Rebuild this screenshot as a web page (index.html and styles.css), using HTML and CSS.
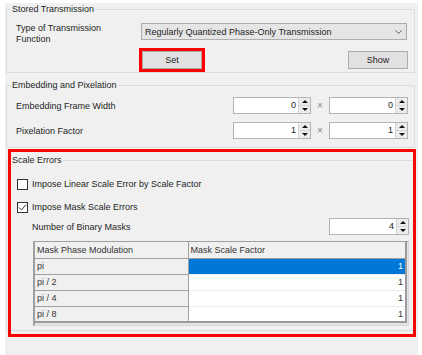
FILE: index.html
```html
<!DOCTYPE html>
<html>
<head>
<meta charset="utf-8">
<link rel="stylesheet" href="styles.css">
</head>
<body>
<div class="panel">
  <fieldset class="group g1">
    <legend>Stored Transmission</legend>
    <div class="r-type">
      <div class="lbl2">Type of Transmission<br>Function</div>
      <div class="combo">
        <span>Regularly Quantized Phase-Only Transmission</span>
        <svg class="chev" width="7" height="4" viewBox="0 0 7 4"><polyline points="0.5,0.5 3.5,3.5 6.5,0.5" fill="none" stroke="#606060" stroke-width="1"/></svg>
      </div>
    </div>
    <div class="r-btns">
      <button class="btn set">Set</button>
      <button class="btn show">Show</button>
    </div>
  </fieldset>

  <fieldset class="group g2">
    <legend>Embedding and Pixelation</legend>
    <div class="pair first">
      <span class="plbl">Embedding Frame Width</span>
      <div class="spin w78"><span class="val">0</span><div class="arrows"><span class="up"></span><span class="dn"></span></div></div>
      <span class="times">×</span>
      <div class="spin w79"><span class="val">0</span><div class="arrows"><span class="up"></span><span class="dn"></span></div></div>
    </div>
    <div class="pair second">
      <span class="plbl">Pixelation Factor</span>
      <div class="spin w78"><span class="val">1</span><div class="arrows"><span class="up"></span><span class="dn"></span></div></div>
      <span class="times">×</span>
      <div class="spin w79"><span class="val">1</span><div class="arrows"><span class="up"></span><span class="dn"></span></div></div>
    </div>
  </fieldset>

  <fieldset class="group g3">
    <legend>Scale Errors</legend>
    <div class="chk c1">
      <span class="box"></span>
      <span class="ctext">Impose Linear Scale Error by Scale Factor</span>
    </div>
    <div class="chk c2">
      <span class="box"><svg width="9" height="9" viewBox="0 0 9 9"><polyline points="1,4.5 3.5,7 8,1.5" fill="none" stroke="#333" stroke-width="1"/></svg></span>
      <span class="ctext">Impose Mask Scale Errors</span>
    </div>
    <div class="nrow">
      <span class="nlbl">Number of Binary Masks</span>
      <div class="spin w80"><span class="val">4</span><div class="arrows"><span class="up"></span><span class="dn"></span></div></div>
    </div>
    <div class="grid">
      <table>
        <tr><th class="hc1">Mask Phase Modulation</th><th class="hc2">Mask Scale Factor</th></tr>
        <tr><td class="rh">pi</td><td class="v sel">1</td></tr>
        <tr><td class="rh">pi / 2</td><td class="v">1</td></tr>
        <tr><td class="rh">pi / 4</td><td class="v">1</td></tr>
        <tr><td class="rh">pi / 8</td><td class="v">1</td></tr>
      </table>
    </div>
  </fieldset>

  <div class="highlight"></div>
</div>
</body>
</html>
```

FILE: styles.css
```css
* { box-sizing: border-box; }

body {
  margin: 0;
  background: #ffffff;
  font-family: "Liberation Sans", Arial, sans-serif;
  font-size: 9px;
  color: #1e1e1e;
}

.panel {
  position: relative;
  margin: 3px 0 0 5px;
  width: 413px;
  height: 352px;
  background: #f0f0f0;
  overflow: hidden;
}

.group {
  margin: 0 0 0 1px;
  width: 409px;
  border: 1px solid #dcdcdc;
  padding: 0;
  min-width: 0;
}

.group legend {
  margin-left: 4px;
  padding: 0 1px;
  line-height: 12px;
  height: 12px;
}

/* group 1 */
.r-type {
  display: flex;
  align-items: flex-start;
  margin-top: 8px;
  padding-left: 9px;
  padding-right: 7px;
  height: 17px;
}

.lbl2 {
  width: 125px;
  line-height: 11px;
  margin-top: -0.5px;
}

.combo {
  width: 266px;
  height: 17px;
  border: 1px solid #adadad;
  background: #e5e5e5;
  display: flex;
  align-items: center;
  padding-left: 3px;
  padding-right: 4px;
}

.chev { margin-left: auto; }

.r-btns {
  display: flex;
  justify-content: space-between;
  margin-top: 11px;
  padding-left: 135px;
  padding-right: 6px;
  padding-bottom: 3px;
}

.btn {
  width: 60px;
  height: 18px;
  border: 1px solid #adadad;
  background: #e1e1e1;
  font: inherit;
  color: #1e1e1e;
  padding: 0;
}

.set { outline: 3px solid #ff0000; }

/* group 2 */
.g2 { margin-top: 6px; }

.pair {
  display: flex;
  align-items: center;
  height: 17px;
  padding-left: 9px;
}

.pair.first { margin-top: 6px; }
.pair.second { margin-top: 8px; margin-bottom: 8px; }

.plbl { width: 217px; }

.times {
  width: 18px;
  text-align: center;
  color: #8a8a8a;
  font-size: 10px;
  line-height: 17px;
}

.spin {
  display: flex;
  height: 17px;
  border: 1px solid #b4b4b4;
  background: #ffffff;
}

.w78 { width: 78px; }
.w79 { width: 79px; }
.w80 { width: 80px; }

.val {
  flex: 1;
  text-align: right;
  padding-right: 2px;
  line-height: 15px;
}

.arrows {
  width: 12px;
  display: flex;
  flex-direction: column;
  border-left: 1px solid #d4d4d4;
  background: #ececec;
}

.arrows span {
  flex: 1;
  display: flex;
  align-items: center;
  justify-content: center;
}

.arrows .up { border-bottom: 1px solid #d4d4d4; }

.arrows .up::before {
  content: "";
  border-left: 3px solid transparent;
  border-right: 3px solid transparent;
  border-bottom: 3px solid #111;
}

.arrows .dn::before {
  content: "";
  border-left: 3px solid transparent;
  border-right: 3px solid transparent;
  border-top: 3px solid #111;
}

/* group 3 */
.g3 {
  margin-top: 6px;
  padding-bottom: 4px;
}

.chk {
  display: flex;
  align-items: center;
  height: 12px;
  padding-left: 10px;
}

.chk.c1 { margin-top: 12px; }
.chk.c2 { margin-top: 11px; }

.box {
  width: 11px;
  height: 11px;
  border: 1px solid #333;
  background: #ffffff;
  display: flex;
  align-items: center;
  justify-content: center;
}

.ctext { margin-left: 4px; }

.nrow {
  display: flex;
  align-items: center;
  height: 17px;
  margin-top: 5px;
  padding-left: 25px;
  padding-right: 5px;
}

.nlbl { margin-right: auto; }

.grid {
  margin: 6px 0 0 26px;
  width: 376px;
  border-top: 1px solid #a0a0a0;
  border-left: 2px solid #a0a0a0;
  border-right: 1px solid #d8d8d8;
  border-bottom: 1px solid #d8d8d8;
  background: #e4e4e4;
  padding: 0 1px 2px 0;
}

.grid table {
  width: 100%;
  border-collapse: collapse;
  border-right: 2px solid #9a9a9a;
  border-bottom: 2px solid #9a9a9a;
}

.grid th, .grid td {
  height: 16px;
  padding: 0 2px;
  font-weight: normal;
  text-align: left;
  color: #333;
  white-space: nowrap;
}

.grid th {
  background: #f0f0f0;
  border-bottom: 1px solid #a0a0a0;
}

.hc1 {
  width: 153px;
  border-right: 1px solid #a0a0a0;
}

.rh {
  background: #f0f0f0;
  border-bottom: 1px solid #a0a0a0;
  border-right: 1px solid #a0a0a0;
}

.v {
  background: #ffffff;
  text-align: right !important;
  border-bottom: 1px solid #ececec;
}

.v.sel {
  background: #0078d7;
  color: #ffffff !important;
}

/* annotation overlay */
.highlight {
  position: absolute;
  left: 3px;
  top: 146px;
  width: 408px;
  height: 188px;
  border: 3px solid #ff0000;
  pointer-events: none;
}
```
